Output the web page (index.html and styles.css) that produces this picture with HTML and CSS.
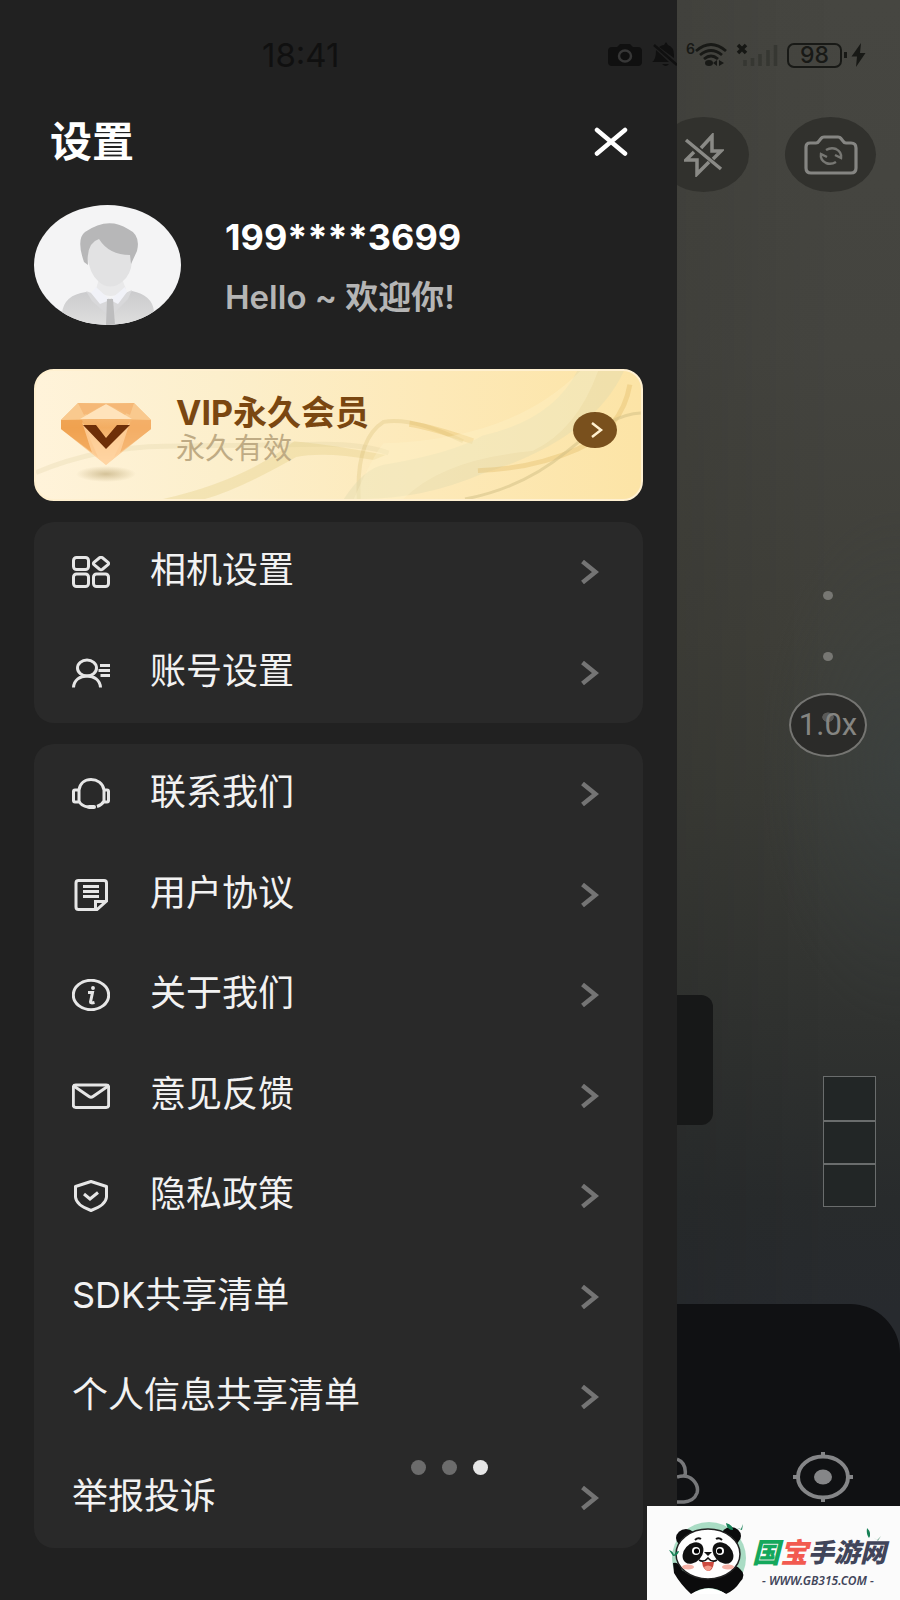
FILE: index.html
```html
<!DOCTYPE html>
<html lang="zh-CN">
<head>
<meta charset="utf-8">
<meta name="viewport" content="width=device-width, initial-scale=1">
<title>设置</title>
<link rel="stylesheet" href="styles.css">
</head>
<body>
<svg class="defs" aria-hidden="true">
  <symbol id="chevron" viewBox="0 0 18 24"><path d="M1.500 1.500 L14.500 12 L1.500 22.500" fill="none" stroke="currentColor" stroke-width="4.500"/></symbol>
</svg>
<div class="screen">
  <aside class="drawer">
    <header class="drawer-head">
      <h1 class="title">设置</h1>
      <button class="close" type="button" aria-label="关闭">
        <svg width="34" height="30" viewBox="0 0 34 30"><path d="M3 3 L31 26.500 M31 3 L3 26.500" stroke="#fff" stroke-width="4.500" stroke-linecap="round"/></svg>
      </button>
    </header>

    <section class="profile">
      <svg class="avatar" viewBox="0 0 147 120" role="img" aria-label="头像">
        <defs>
          <clipPath id="av"><ellipse cx="73.500" cy="60" rx="73.500" ry="60"/></clipPath>
          <linearGradient id="coat" x1="0" y1="0" x2="0" y2="1"><stop offset="0" stop-color="#cbcbcd"/><stop offset="1" stop-color="#dedede"/></linearGradient>
        </defs>
        <g clip-path="url(#av)">
          <rect width="147" height="120" fill="#f4f4f5"/>
          <path d="M28 120 L28 108 Q30 90 52 87 L76 94 L98 86 Q118 90 120 106 L122 120Z" fill="url(#coat)"/>
          <path d="M52 86 L76 95 L98 85 L94 94 L76 112 L58 96Z" fill="#d8d8da"/>
          <path d="M65 74 L62 84 Q76 98 92 84 L88 74Z" fill="#e9e9ea"/>
          <path d="M62 82 L76 95 L66 99 L57 88Z M91 82 L76 95 L84 99 L93 87Z" fill="#f1f2f8"/>
          <path d="M73 94 H79 L81 120 H72Z" fill="#bdbdbe"/>
          <path d="M53 42 Q50 30 61 26 Q80 19 94 28 Q103 36 98 56 Q97 70 88 77 Q76 86 65 77 Q53 67 53 42Z" fill="#e2e2e3"/>
          <path d="M50 57 Q42 34 51 27 Q74 11 94 24 Q107 30 103 46 L97 59 L96 50 Q75 50 65 34 Q52 38 54 60Z" fill="#b7b7b8"/>
        </g>
      </svg>
      <div class="who">
        <p class="phone">199****3699</p>
        <p class="hello">Hello ~ 欢迎你!</p>
      </div>
    </section>

    <a class="vip" href="#vip">
      <svg class="vip-art" viewBox="0 0 609 131" preserveAspectRatio="none" aria-hidden="true">
        <path d="M0 104 Q60 78 130 77 T290 75 Q330 75 355 84" fill="none" stroke="#d6c894" stroke-opacity=".22" stroke-width="5"/>
        <path d="M128 131 Q210 112 260 72 Q300 76 352 86 L340 91 Q290 82 262 88 Q205 121 170 131Z" fill="#e6d088" fill-opacity=".38"/>
        <path d="M325 131 Q322 70 350 52 Q380 47 430 72" fill="none" stroke="#d8bd74" stroke-opacity=".3" stroke-width="4"/>
        <path d="M376 54 Q400 58 440 72" fill="none" stroke="#e5bd62" stroke-opacity=".35" stroke-width="6"/>
        <path d="M310 131 Q330 100 350 96 Q420 84 450 66 Q520 50 545 0 L592 0 Q560 70 450 105 Q390 131 330 131Z" fill="#dedaae" fill-opacity=".4"/>
        <path d="M320 131 Q340 85 350 74 Q480 70 548 0 L566 0 Q545 60 500 82 Q410 90 370 131Z" fill="#fff4ce" fill-opacity=".3"/>
        <path d="M445 102 Q500 100 545 80 T598 14" fill="none" stroke="#dfb660" stroke-opacity=".35" stroke-width="5"/>
        <path d="M432 131 Q490 120 535 82 T609 43" fill="none" stroke="#d0bd83" stroke-opacity=".5" stroke-width="3"/>
      </svg>
      <svg class="gem" width="92" height="84" viewBox="0 0 92 84" aria-hidden="true">
        <defs>
          <linearGradient id="gold" x1="0" y1="0" x2="0" y2="1"><stop offset="0" stop-color="#f7c68b"/><stop offset=".4" stop-color="#f3ad62"/><stop offset="1" stop-color="#ffdcae"/></linearGradient>
          <radialGradient id="shade"><stop offset="0" stop-color="#c6b284" stop-opacity=".75"/><stop offset="1" stop-color="#c6b284" stop-opacity="0"/></radialGradient>
        </defs>
        <ellipse cx="46" cy="75" rx="30" ry="8" fill="url(#shade)"/>
        <path d="M18 4 H74 L91 21 V30 L46 66 L1 30 V21Z" fill="url(#gold)"/>
        <path d="M1 21 L18 4 L30 20Z M91 21 L74 4 L62 20Z" fill="#f9c98e"/>
        <path d="M20 20 L46 5 L72 20Z" fill="#ffe3bb"/>
        <path d="M18 4 L46 5 L24 16Z M74 4 L46 5 L70 16Z" fill="#f5b877"/>
        <path d="M1 21 H22 L38 58 L1 30Z" fill="#ee9b45" fill-opacity=".65"/>
        <path d="M91 21 H72 L54 58 L91 30Z" fill="#f4ae66" fill-opacity=".7"/>
        <path d="M22 23 L46 50 L70 23 L60 54 L46 66 L32 54Z" fill="#ffd3a0" fill-opacity=".75"/>
        <path d="M23 26 H36 L46 39 L57 26 H70 L46 50Z" fill="#6e2f08"/>
      </svg>
      <div class="vip-text">
        <strong class="vip-name">VIP永久会员</strong>
        <span class="vip-note">永久有效</span>
      </div>
      <svg class="vip-go" width="44" height="36" viewBox="0 0 44 36" aria-hidden="true"><ellipse cx="22" cy="18" rx="22" ry="18" fill="#79501d"/><path d="M19 11 L28 18 L19 25" fill="none" stroke="#fff0cf" stroke-width="2.500"/></svg>
    </a>

    <nav class="card card-short">
      <a class="row" href="#camera">
        <svg class="icon" viewBox="0 0 38 32"><rect x="1.500" y="1.500" width="15" height="12" rx="3"/><rect x="1.500" y="18" width="15" height="12.500" rx="3"/><rect x="21.500" y="18" width="15" height="12.500" rx="3"/><path d="M27.500 1.800 Q29 .8 30.500 1.800 L36 6.300 Q37.200 7.500 36 8.700 L30.500 13.200 Q29 14.200 27.500 13.200 L22 8.700 Q20.800 7.500 22 6.300Z"/></svg>
        <span class="label">相机设置</span><svg class="chev"><use href="#chevron"/></svg>
      </a>
      <a class="row" href="#account">
        <svg class="icon" viewBox="0 0 38 32"><ellipse cx="15" cy="11" rx="9.500" ry="8"/><path d="M1.500 30.500 C2 23 8 19 15 19 S28 23 28.500 30.500 M28 8.500 H38 M26.500 13.500 H38 M28.500 18.500 H38"/></svg>
        <span class="label">账号设置</span><svg class="chev"><use href="#chevron"/></svg>
      </a>
    </nav>

    <nav class="card card-long">
      <a class="row" href="#contact">
        <svg class="icon" viewBox="0 0 38 32"><path d="M7 13 V12 C8 5 13 1.500 19 1.500 S31 5 32 12 V13 M7 12 H3 Q1.500 12 1.500 13.500 V22.500 Q1.500 24 3 24 H7Z M32 12 H35 Q36.500 12 36.500 13.500 V22.500 Q36.500 24 35 24 H32Z M7 23 Q9 28 16 29 M32 23 Q30 27 25 28.500"/><path d="M17 29 H22" stroke-width="4" stroke-linecap="round"/></svg>
        <span class="label">联系我们</span><svg class="chev"><use href="#chevron"/></svg>
      </a>
      <a class="row" href="#terms">
        <svg class="icon" viewBox="0 0 38 32"><path d="M6.500 1.500 H32 Q34.500 1.500 34.500 4 V22 L25 30.500 H6.500 Q4 30.500 4 28 V4 Q4 1.500 6.500 1.500Z M11 7.500 H27 M11 12.500 H27 M11 17.500 H27 M23.500 29 V22.500 H33"/></svg>
        <span class="label">用户协议</span><svg class="chev"><use href="#chevron"/></svg>
      </a>
      <a class="row" href="#about">
        <svg class="icon" viewBox="0 0 38 32"><ellipse cx="19" cy="16" rx="17.700" ry="14.700"/><path d="M16 13.500 H20.500 L18.500 23 Q18.500 24.500 22.500 23.500"/><circle cx="21" cy="9" r="1.200" fill="#f0f0f0" stroke-width="1.500"/></svg>
        <span class="label">关于我们</span><svg class="chev"><use href="#chevron"/></svg>
      </a>
      <a class="row" href="#feedback">
        <svg class="icon" viewBox="0 0 38 32"><rect x="1.300" y="5" width="35.400" height="22.500" rx="2.500"/><path d="M2.500 6.500 L17 16.500 Q19 18 21 16.500 L35.500 6.500"/></svg>
        <span class="label">意见反馈</span><svg class="chev"><use href="#chevron"/></svg>
      </a>
      <a class="row" href="#privacy">
        <svg class="icon" viewBox="0 0 38 32"><path d="M19 1.500 L34.500 6.500 V17 Q34 25 19 30.500 Q4 25 3.500 17 V6.500Z" stroke-linejoin="round"/><path d="M12 14 L18 19 L26 12.500"/></svg>
        <span class="label">隐私政策</span><svg class="chev"><use href="#chevron"/></svg>
      </a>
      <a class="row" href="#sdk"><span class="label">SDK共享清单</span><svg class="chev"><use href="#chevron"/></svg></a>
      <a class="row" href="#personal"><span class="label">个人信息共享清单</span><svg class="chev"><use href="#chevron"/></svg></a>
      <a class="row" href="#report"><span class="label">举报投诉</span><svg class="chev"><use href="#chevron"/></svg></a>
    </nav>
  </aside>

  <main class="camera">
    <div class="tools">
      <button class="tool" type="button" aria-label="闪光灯">
        <svg width="40" height="44" viewBox="0 0 40 44"><path d="M2 7 L37 36 M17 15 L28 3 V18 H37 L29 26 M10 19 L2 27 H13 V41 L25 29" fill="none" stroke="#8a8a86" stroke-width="3.500"/></svg>
      </button>
      <button class="tool" type="button" aria-label="切换摄像头">
        <svg width="54" height="40" viewBox="0 0 54 40"><path d="M6 8 H12 Q14 8 15 6 L17 3.500 Q18 2 20 2 H34 Q36 2 37 3.500 L39 6 Q40 8 42 8 H47 Q52 8 52 13 V33 Q52 38 47 38 H7 Q2 38 2 33 V12 Q2 8 6 8Z" fill="none" stroke="#858582" stroke-width="3.200"/><path d="M22 15 Q27 12 32 14 Q38 17 37 23 L31 20 M32 27 Q27 30 22 28 Q16 25 17 19 L23 22" fill="none" stroke="#777773" stroke-width="2.500"/></svg>
      </button>
    </div>
    <div class="zoomer">
      <i class="tick"></i><i class="tick"></i>
      <button class="level" type="button">1.0x</button>
    </div>
    <div class="side">
      <div class="shade-box"></div>
      <div class="cells"><i></i><i></i><i></i></div>
    </div>
    <div class="dock">
      <svg width="23" height="60" viewBox="0 0 23 60" aria-hidden="true"><path d="M0 7 Q10 11 8 24 M0 25 Q10 22 16 28 Q22 34 20 41 Q17 49 7 50 H0" fill="none" stroke="#77787a" stroke-width="3.500"/></svg>
      <svg width="60" height="50" viewBox="0 0 60 50" aria-hidden="true"><g fill="none" stroke="#858688" stroke-width="4"><ellipse cx="30" cy="25" rx="25" ry="20.500"/><path d="M30 0 V6 M30 44 V50 M0 25 H6 M54 25 H60"/></g><ellipse cx="30" cy="25" rx="9" ry="7.500" fill="#858688"/></svg>
    </div>
  </main>

  <div class="status">
    <span class="clock">18:41</span>
    <div class="signals">
      <svg width="36" height="24" viewBox="0 0 36 24"><path d="M5 4 H10 L13 1 H23 L26 4 H31 Q35 4 35 8 V19 Q35 23 31 23 H5 Q1 23 1 19 V8 Q1 4 5 4Z" fill="#101010"/><ellipse cx="18" cy="13" rx="6" ry="5.500" fill="none" stroke="#373737" stroke-width="2.500"/></svg>
      <svg width="25" height="26" viewBox="0 0 25 26"><path d="M4 8 L17 20 H0 Q4 18 4 8Z M7 5 Q10 3 12 3 L14 0 L16 3 Q22 5 22 13 V16Z M10 22 H17 Q14 26 10 22Z" fill="#101010"/><path d="M2 3 L25 23" stroke="#101010" stroke-width="2.500"/></svg>
      <span class="wifi"><small>6</small><svg width="32" height="26" viewBox="0 0 32 26"><g fill="none" stroke="#181916" stroke-width="2.800"><path d="M1 9 Q16 -4 31 9 M5 13 Q16 4 27 13 M9 17 Q16 11 23 17"/></g><ellipse cx="14" cy="21" rx="4" ry="3" fill="#181916"/><path d="M18 21 L22 18 V24Z M24 18 L29 21 L24 24Z" fill="#181916"/></svg></span>
      <svg width="42" height="26" viewBox="0 0 42 26"><path d="M2 3 L10 11 M10 3 L2 11" stroke="#161714" stroke-width="3.500"/><path d="M9 24 V18 M16.500 24 V16 M24 24 V12 M32 24 V8 M39.500 24 V3" stroke="#363732" stroke-width="3.500"/></svg>
      <span class="battery">98</span>
      <svg class="bolt" width="22" height="26" viewBox="0 0 22 26"><path d="M1.500 10 V16" stroke="#181916" stroke-width="3"/><path d="M17 1 L7.500 14.500 H13 L12 25 L21.500 11 H16Z" fill="#181916"/></svg>
    </div>
  </div>

  <div class="pager"><i></i><i></i><i class="on"></i></div>

  <div class="mark">
    <svg class="panda" width="78" height="74" viewBox="0 0 78 74" role="img" aria-label="熊猫">
      <ellipse cx="40" cy="37" rx="37" ry="36" fill="#a9dcc4"/>
      <path d="M4 42 Q10 40 13 49 Q23 57 39 57 Q55 57 58 46 Q66 42 71 48 Q78 54 71 61 Q66 69 57 73 Q40 61 22 73 Q12 64 5 52Z" fill="#0b0b0c"/>
      <path d="M23 73 Q39 62 57 73Z" fill="#fff"/>
      <ellipse cx="17" cy="17" rx="10" ry="9" fill="#0b0b0c"/><ellipse cx="62" cy="15" rx="10" ry="9" fill="#0b0b0c"/>
      <ellipse cx="39" cy="33" rx="32" ry="25" fill="#fff" stroke="#222" stroke-width="1.500"/>
      <ellipse cx="24" cy="32" rx="12" ry="9" fill="#111" transform="rotate(-48 24 32)"/><ellipse cx="54" cy="32" rx="12" ry="9" fill="#111" transform="rotate(48 54 32)"/>
      <circle cx="27" cy="30" r="4" fill="#fff"/><circle cx="27.500" cy="30" r="2.600"/><circle cx="51" cy="30" r="4" fill="#fff"/><circle cx="50.500" cy="30" r="2.600"/>
      <path d="M26 19 Q29 16 32 18 M47 18 Q50 16 53 19" fill="none" stroke="#111" stroke-width="2"/>
      <path d="M35 31 H43 L39 35Z" fill="#111"/><path d="M30 39 Q35 42 39 37 Q43 42 48 39" fill="none" stroke="#111" stroke-width="1.500"/>
      <path d="M33 41 H45 Q44 50 39 50 Q34 49 33 41Z" fill="#cd4a3f"/><path d="M35 46 Q39 43 43 46 Q41 50 39 50 Q36 49 35 46Z" fill="#f29a8a"/>
      <ellipse cx="19" cy="46" rx="6" ry="2.500" fill="#f7b2a7"/><ellipse cx="59" cy="46" rx="6" ry="2.500" fill="#f7b2a7"/>
      <path d="M0 29 Q4 30 5 34 Q7 30 10 30 Q9 35 4 35Z M57 2 Q64 4 64 9 Q58 9 57 2Z M68 7 L72 8 L74 3 L73 9Z" fill="#178056"/>
    </svg>
    <div class="brand">
      <svg class="leaf" width="16" height="14" viewBox="0 0 16 14" aria-hidden="true"><path d="M1 0 Q6 5 3 10 Q0 6 1 0Z" fill="#178056"/><path d="M7 9 L11 12 L15 8 L12 13Z" fill="#8fb9a5"/></svg>
      <div class="word"><b class="guo">国</b><b class="bao">宝</b><b class="rest">手游网</b></div>
      <div class="url">- WWW.GB315.COM -</div>
    </div>
  </div>
</div>
</body>
</html>
```
FILE: styles.css
```css
* { box-sizing: border-box; margin: 0; padding: 0; }

body {
  background: #212121;
  color: #f2f2f2;
  font-family: Inter, "Noto Sans CJK SC", sans-serif;
}

a { color: inherit; text-decoration: none; }
button { border: 0; background: none; font: inherit; color: inherit; }
svg { display: block; flex: none; }
.defs { width: 0; height: 0; position: absolute; }

.screen { position: relative; display: flex; min-height: 100vh; overflow: hidden; }

/* Drawer */
.drawer {
  flex: 0 0 75.2%;
  display: flex;
  flex-direction: column;
  padding: 112px 34px 52px;
  background: #212121;
}
.drawer-head {
  display: flex;
  align-items: center;
  justify-content: space-between;
  height: 60px;
  padding: 0 15px 0 16px;
}
.title { font-size: 42px; line-height: 60px; font-weight: 700; color: #fff; }
.close { display: flex; }

.profile { display: flex; align-items: center; gap: 44px; margin-top: 33px; }
.avatar { width: 147px; height: 120px; }
.who { display: flex; flex-direction: column; gap: 16px; padding-top: 4px; }
.phone { font-size: 36px; line-height: 44px; font-weight: 700; color: #fff; }
.hello { font-size: 33px; line-height: 44px; font-weight: 600; color: #b5b5b5; }

.vip {
  position: relative;
  display: flex;
  align-items: center;
  height: 132px;
  margin-top: 44px;
  padding: 0 24px;
  overflow: hidden;
  border: 2px solid #fff0d0;
  border-radius: 20px;
  background: linear-gradient(90deg, #fff3da 0%, #fcefcc 30%, #fde9b8 65%, #fce4a6 100%);
}
.vip-art { position: absolute; inset: 0; width: 100%; height: 100%; }
.gem, .vip-text, .vip-go { position: relative; }
.gem { margin-top: 12px; }
.vip-text { flex: 1; display: flex; flex-direction: column; padding: 0 0 8px 24px; }
.vip-name { font-size: 34px; line-height: 36px; font-weight: 700; color: #7a4711; }
.vip-note { font-size: 29px; line-height: 36px; color: #bfab84; }
.vip-go { margin-top: -10px; }

.card {
  display: flex;
  flex-direction: column;
  margin-top: 21px;
  border-radius: 20px;
  background: #292929;
}
.card-short { flex: 2 0 0; }
.card-long { flex: 8 0 0; }
.row {
  flex: 1 0 64px;
  display: flex;
  align-items: center;
  padding: 0 44px 0 38px;
}
.icon {
  width: 38px;
  height: 32px;
  margin-right: 40px;
  fill: none;
  stroke: #e6e6e6;
  stroke-width: 3px;
}
.label { flex: 1; font-size: 36px; line-height: 48px; padding-bottom: 4px; }
.chev { width: 18px; height: 24px; color: #747474; }

/* Camera behind the drawer */
.camera {
  flex: 1;
  min-width: 0;
  display: flex;
  flex-direction: column;
  overflow: hidden;
  background:
    radial-gradient(ellipse 140px 260px at 100% 48%, rgba(60, 72, 76, .35), transparent),
    linear-gradient(90deg, rgba(20, 20, 18, .1), transparent 70%),
    linear-gradient(#464641 0, #44443f 22%, #3f3f39 40%, #3a3b36 50%, #303230 64%, #282b2c 75%, #272a2e 82%);
}
.tools { display: flex; justify-content: flex-end; gap: 36px; padding: 117px 24px 0 0; }
.tool {
  flex: none;
  display: flex;
  align-items: center;
  justify-content: center;
  width: 91px;
  height: 75px;
  border-radius: 50%;
  background: #31312d;
}
.zoomer {
  display: flex;
  flex-direction: column;
  align-items: center;
  align-self: flex-end;
  width: 78px;
  margin: 399px 33px 0 0;
}
.tick { width: 10px; height: 9px; margin-bottom: 52px; border-radius: 50%; background: #777773; }
.tick + .tick { margin-bottom: 32px; }
.level {
  width: 78px;
  height: 64px;
  border: 2px solid #757572;
  border-radius: 50%;
  background: radial-gradient(ellipse 6px 5px at 50% 37%, #5a5a58 90%, transparent), #2b2b29;
  color: #858582;
  font: 31px/56px Roboto, sans-serif;
}
.side {
  display: flex;
  justify-content: space-between;
  margin-top: 238px;
  padding-right: 24px;
}
.shade-box { width: 36px; height: 130px; border-radius: 0 12px 12px 0; background: #171818; }
.cells { width: 53px; margin-top: 81px; border: 1px solid #6a6d6d; background: #222626; }
.cells i { display: block; height: 43px; }
.cells i + i { border-top: 2px solid #6a6d6d; }
.dock {
  flex: 1;
  display: flex;
  align-items: flex-start;
  justify-content: space-between;
  margin-top: 97px;
  padding: 148px 47px 0 0;
  border-top-right-radius: 50px;
  background: #101113;
}

/* Status bar */
.status {
  position: absolute;
  inset: 0 0 auto;
  display: flex;
  align-items: center;
  justify-content: space-between;
  height: 110px;
  padding: 0 34px 0 262px;
  color: #101010;
}
.clock { font-size: 33px; line-height: 36px; }
.signals { display: flex; align-items: center; gap: 9px; color: #181916; }
.wifi { display: flex; }
.wifi small { font-size: 14px; line-height: 14px; font-weight: 600; }
.battery {
  width: 55px;
  height: 25px;
  border: 2px solid #181916;
  border-radius: 7px;
  font-size: 23px;
  line-height: 21px;
  font-weight: 500;
  text-align: center;
}
.bolt { margin-left: -7px; }

/* Page dots */
.pager { position: absolute; left: 411px; bottom: 125px; display: flex; gap: 16px; }
.pager i { width: 15px; height: 15px; border-radius: 50%; background: #6c6c6c; }
.pager .on { background: #e6e6e6; }

/* Site badge */
.mark {
  position: absolute;
  right: 0;
  bottom: 0;
  display: flex;
  align-items: flex-start;
  gap: 5px;
  width: 253px;
  height: 94px;
  padding: 15px 0 0 22px;
  background: #fbfbfb;
}
.brand { position: relative; flex: 1; padding-top: 12px; }
.leaf { position: absolute; left: 114px; top: 7px; }
.word { display: flex; align-items: center; font-size: 26px; line-height: 40px; font-style: italic; white-space: nowrap; }
.word b { font-weight: 900; }
.word .guo, .word .bao { font-size: 28px; }
.guo { color: #14a85c; }
.bao { color: #f25a50; }
.rest { color: #41455a; }
.url {
  padding-left: 10px;
  color: #41455a;
  font: italic 600 12px/16px "Noto Sans", sans-serif;
  white-space: nowrap;
}
```
